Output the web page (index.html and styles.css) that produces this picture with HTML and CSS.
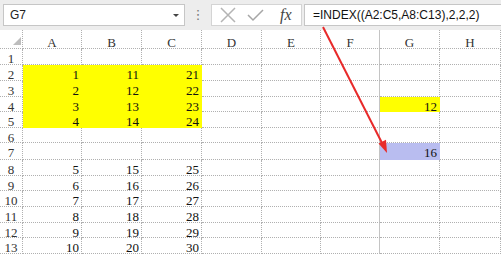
FILE: index.html
```html
<!DOCTYPE html>
<html lang="en">
<head>
    <meta charset="UTF-8">
    <title>INDEX</title>
    <link rel="stylesheet" href="styles.css">
</head>
<body>
    <div class="window">
        <div class="formula-bar">
            <div class="name-box"><span>G7</span><span class="drop"></span></div>
            <div class="grip">&#8942;</div>
            <div class="fx-buttons">
                <svg class="btn" width="20" height="16" viewBox="0 0 20 16">
                    <path d="M3 1 L17 15 M17 1 L3 15" stroke="#b4b4b4" stroke-width="1.5" fill="none"/>
                </svg>
                <svg class="btn" width="20" height="16" viewBox="0 0 20 16">
                    <path d="M2 8 L7 13 L17 3" stroke="#a6a6a6" stroke-width="1.5" fill="none"/>
                </svg>
                <span class="fx">fx</span>
            </div>
            <div class="formula">=INDEX((A2:C5,A8:C13),2,2,2)</div>
        </div>
        <div class="sheet">
            <div class="corner"></div><div class="ch">A</div><div class="ch">B</div><div class="ch">C</div><div class="ch">D</div><div class="ch">E</div><div class="ch">F</div><div class="ch">G</div><div class="ch">H</div>
            <div class="rh">1</div><div></div><div></div><div></div><div></div><div></div><div></div><div></div><div></div>
            <div class="rh">2</div><div class="y">1</div><div class="y">11</div><div class="y">21</div><div></div><div></div><div></div><div></div><div></div>
            <div class="rh">3</div><div class="y">2</div><div class="y">12</div><div class="y">22</div><div></div><div></div><div></div><div></div><div></div>
            <div class="rh">4</div><div class="y">3</div><div class="y">13</div><div class="y">23</div><div></div><div></div><div></div><div class="y">12</div><div></div>
            <div class="rh">5</div><div class="y">4</div><div class="y">14</div><div class="y">24</div><div></div><div></div><div></div><div></div><div></div>
            <div class="rh">6</div><div></div><div></div><div></div><div></div><div></div><div></div><div></div><div></div>
            <div class="rh">7</div><div></div><div></div><div></div><div></div><div></div><div></div><div class="sel">16</div><div></div>
            <div class="rh">8</div><div>5</div><div>15</div><div>25</div><div></div><div></div><div></div><div></div><div></div>
            <div class="rh">9</div><div>6</div><div>16</div><div>26</div><div></div><div></div><div></div><div></div><div></div>
            <div class="rh">10</div><div>7</div><div>17</div><div>27</div><div></div><div></div><div></div><div></div><div></div>
            <div class="rh">11</div><div>8</div><div>18</div><div>28</div><div></div><div></div><div></div><div></div><div></div>
            <div class="rh">12</div><div>9</div><div>19</div><div>29</div><div></div><div></div><div></div><div></div><div></div>
            <div class="rh">13</div><div>10</div><div>20</div><div>30</div><div></div><div></div><div></div><div></div><div></div>
        </div>
        <!-- arrow from the formula to the result cell -->
        <svg class="arrow" width="501" height="255" viewBox="0 0 501 255">
            <line x1="323" y1="27" x2="382" y2="143" stroke="#e82a2a" stroke-width="2"/>
            <polygon points="387,153 378.5,143.5 386,139.8" fill="#e82a2a"/>
        </svg>
    </div>
</body>
</html>
```

FILE: styles.css
```css
body {
    margin: 0;
    background-color: #fff;
}
.window {
    position: relative;
    width: 501px;
    height: 255px;
    overflow: hidden;
    font-family: "Liberation Sans", Arial, sans-serif;
}
.formula-bar {
    display: flex;
    align-items: flex-start;
    height: 30px;
    padding: 4px 0 0 3px;
    box-sizing: border-box;
    background-color: #ededed;
}
.name-box {
    width: 182px;
    height: 22px;
    box-sizing: border-box;
    display: flex;
    align-items: center;
    justify-content: space-between;
    padding: 0 5px 0 6px;
    background-color: #fff;
    border: 1px solid #c6c6c6;
    font-size: 12px;
    color: #222;
}
.drop {
    border-left: 3px solid transparent;
    border-right: 3px solid transparent;
    border-top: 3px solid #444;
}
.grip {
    width: 26px;
    text-align: center;
    font: 13px/22px "DejaVu Sans", sans-serif;
    color: #777;
}
.fx-buttons {
    width: 91px;
    height: 22px;
    box-sizing: border-box;
    display: flex;
    align-items: center;
    gap: 8px;
    padding-left: 6px;
    background-color: #fff;
    border: 1px solid #d4d4d4;
}
.fx {
    margin-left: 6px;
    font: italic 16px "Liberation Serif", serif;
    color: #444;
}
.formula {
    flex: 1;
    height: 22px;
    box-sizing: border-box;
    margin-left: 2px;
    padding-left: 8px;
    background-color: #fff;
    border: 1px solid #c6c6c6;
    border-right: none;
    font-size: 12px;
    line-height: 20px;
    color: #111;
}
.sheet {
    display: grid;
    grid-template-columns: 23px 59px 60px 60px 60px 59px 59px 60px 61px;
    grid-template-rows: 19px 16px 16px 16px 15px 16px 15px 17px 16px 15px 16px 16px 15px 16px;
}
.sheet div {
    box-sizing: border-box;
    padding: 2px 2px 0 0;
    border-right: 1px dotted #b0b0b0;
    border-bottom: 1px dotted #b0b0b0;
    font: 13px/15px "Liberation Serif", serif;
    color: #111;
    text-align: right;
    white-space: nowrap;
}
.sheet div:nth-child(9n+7) {
    border-right: 1px solid #c4c4c4;
}
.sheet .ch {
    padding: 5px 0 0 0;
    text-align: center;
    color: #333;
}
.sheet .rh {
    padding-right: 0;
    text-align: center;
    color: #333;
}
.sheet .corner {
    display: flex;
    justify-content: flex-end;
    align-items: flex-end;
    padding: 0 1px 3px 0;
}
.corner::after {
    content: "";
    border-left: 8px solid transparent;
    border-bottom: 8px solid #bdbdbd;
}
.sheet .y {
    background-color: #ffff00;
    border-color: transparent;
}
.sheet .sel {
    background-color: #b9bdf0;
    border-color: transparent;
}
.arrow {
    position: absolute;
    left: 0;
    top: 0;
    pointer-events: none;
}
```
